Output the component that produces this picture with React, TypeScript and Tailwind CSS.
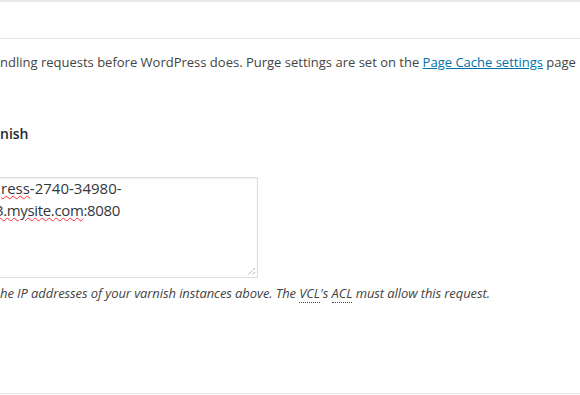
const font = { fontFamily: '"Open Sans", "Noto Sans", sans-serif' }

export default function App() {
  return (
    <div className="h-[395px] w-[580px] overflow-hidden bg-white text-[#444]" style={font}>
      <div className="h-[2px] bg-[#e8e8e8]" />
      <div className="h-[36px]" />
      <div className="h-px bg-[#e8e8e8]" />

      <div className="mt-[13px] whitespace-nowrap text-[13px] leading-[20px]">
        ndling requests before WordPress does. Purge settings are set on the{' '}
        <a className="text-[#0073aa] underline">Page Cache settings</a> page
      </div>

      <h3 className="mt-[52px] text-[14px] font-semibold leading-[20px] text-[#23282d]">nish</h3>

      <div className="mt-[33px] flex">
        <div className="relative -ml-[60px] h-[101px] w-[318px] border border-[#ddd] shadow-[inset_0_1px_2px_rgba(0,0,0,0.07)]">
          <div className="-mt-[1px] pl-[60px] text-[15px] leading-[22px] text-[#32373c]">
            <div>
              <span className="underline decoration-wavy decoration-red-500 decoration-[1px]">ress</span>-2740-34980-
            </div>
            <div className="-ml-[6px] tracking-[-0.35px]">
              <span className="underline decoration-wavy decoration-red-500 decoration-[1px]">3.mysite.com</span>:8080
            </div>
          </div>
          <svg className="absolute bottom-[1px] right-[1px]" width="9" height="9" viewBox="0 0 9 9">
            <path d="M8 1 L1 8 M8 5 L5 8" stroke="#888" strokeWidth="1" strokeDasharray="1 1" />
          </svg>
        </div>
      </div>

      <p className="mt-[5px] whitespace-nowrap text-[13px] italic leading-[20px] tracking-[-0.09px]">
        he IP addresses of your varnish instances above. The{' '}
        <abbr className="no-underline border-b border-dotted border-[#444]">VCL</abbr>'s{' '}
        <abbr className="no-underline border-b border-dotted border-[#444]">ACL</abbr> must allow this request.
      </p>

      <div className="mt-[90px] h-px bg-[#e5e5e5]" />
    </div>
  )
}
